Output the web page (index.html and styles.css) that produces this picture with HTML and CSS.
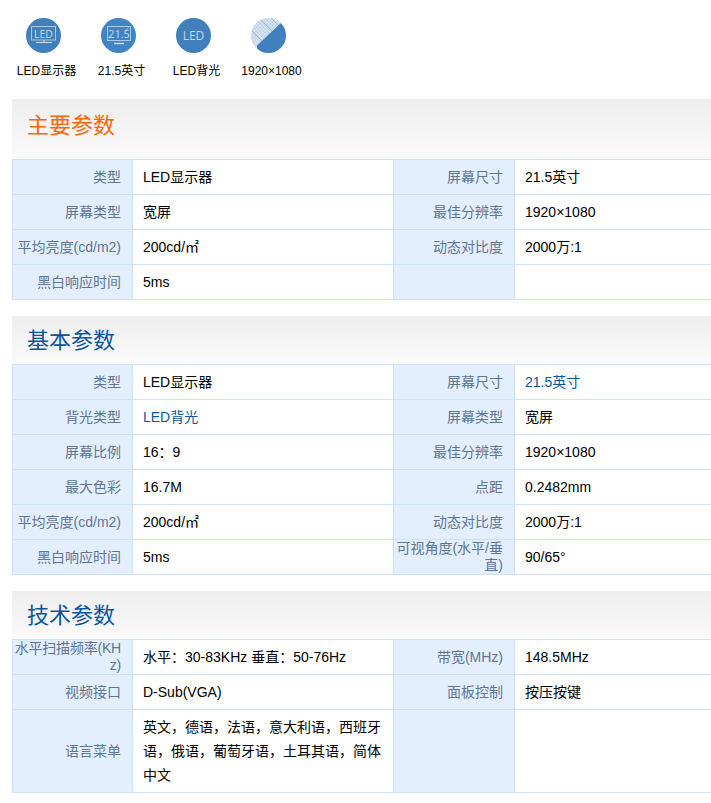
FILE: index.html
```html
<!DOCTYPE html>
<html lang="zh-CN">

<head>
  <meta charset="UTF-8">
  <meta name="viewport" content="width=device-width, initial-scale=1.0">
  <title>参数</title>
  <link rel="stylesheet" href="styles.css">
</head>

<body>
  <div class="page">
    <div class="icons">
      <div class="icons__item">
        <svg class="icons__pic" viewBox="0 0 35 35">
          <circle cx="17.5" cy="17.5" r="17.5" fill="#3f80bd" />
          <rect x="5.5" y="8.5" width="24" height="13.5" fill="none" stroke="#a9c8e4" />
          <path d="M10 24.5h16M18 22v2" fill="none" stroke="#cfe0f0" />
          <text x="17.5" y="19.5" class="icons__txt" font-size="10.5">LED</text>
        </svg>
        <div class="icons__label">LED显示器</div>
      </div>
      <div class="icons__item">
        <svg class="icons__pic" viewBox="0 0 35 35">
          <circle cx="17.5" cy="17.5" r="17.5" fill="#3f85c5" />
          <rect x="6.5" y="8.5" width="23" height="14" fill="none" stroke="#a9c8e4" />
          <path d="M8 21l3-3M25 12l3-3" fill="none" stroke="#a9c8e4" stroke-width=".7" />
          <path d="M13 25.5h10" fill="none" stroke="#cfe0f0" stroke-width="1.4" />
          <text x="18" y="20" class="icons__txt" font-size="11">21.5</text>
        </svg>
        <div class="icons__label">21.5英寸</div>
      </div>
      <div class="icons__item">
        <svg class="icons__pic" viewBox="0 0 35 35">
          <circle cx="17.5" cy="17.5" r="17.5" fill="#3f80bd" />
          <text x="17.5" y="21.5" class="icons__txt" font-size="12">LED</text>
        </svg>
        <div class="icons__label">LED背光</div>
      </div>
      <div class="icons__item">
        <svg class="icons__pic" viewBox="0 0 35 35">
          <defs>
            <pattern id="grid" width="2.5" height="2.5" patternUnits="userSpaceOnUse" patternTransform="rotate(45)">
              <rect width="2.5" height="2.5" fill="#dbe6f1" />
              <path d="M0 0h2.5M0 0v2.5" stroke="#a8c3de" stroke-width=".8" />
            </pattern>
            <clipPath id="round">
              <circle cx="17.5" cy="17.5" r="17.5" />
            </clipPath>
          </defs>
          <g clip-path="url(#round)">
            <rect width="35" height="35" fill="url(#grid)" />
            <path d="M8 0l20 20M0 12l14 14M20 0l10 10" stroke="#86aad0" stroke-width=".7" />
            <path d="M6 27.5L30 5l5 5v25H6z" fill="#3f80bd" />
          </g>
        </svg>
        <div class="icons__label">1920×1080</div>
      </div>
    </div>

    <div class="sec sec--main">
      <h2 class="sec__title">主要参数</h2>
      <table class="params">
        <colgroup>
          <col class="params__k">
          <col class="params__v">
          <col class="params__k2">
          <col class="params__v">
        </colgroup>
        <tr>
          <th>类型</th>
          <td>LED显示器</td>
          <th>屏幕尺寸</th>
          <td>21.5英寸</td>
        </tr>
        <tr>
          <th>屏幕类型</th>
          <td>宽屏</td>
          <th>最佳分辨率</th>
          <td>1920×1080</td>
        </tr>
        <tr>
          <th>平均亮度(cd/m2)</th>
          <td>200cd/㎡</td>
          <th>动态对比度</th>
          <td>2000万:1</td>
        </tr>
        <tr>
          <th>黑白响应时间</th>
          <td>5ms</td>
          <th></th>
          <td></td>
        </tr>
      </table>
    </div>

    <div class="sec">
      <h2 class="sec__title">基本参数</h2>
      <table class="params">
        <colgroup>
          <col class="params__k">
          <col class="params__v">
          <col class="params__k2">
          <col class="params__v">
        </colgroup>
        <tr>
          <th>类型</th>
          <td>LED显示器</td>
          <th>屏幕尺寸</th>
          <td><a href="#">21.5英寸</a></td>
        </tr>
        <tr>
          <th>背光类型</th>
          <td><a href="#">LED背光</a></td>
          <th>屏幕类型</th>
          <td>宽屏</td>
        </tr>
        <tr>
          <th>屏幕比例</th>
          <td>16：9</td>
          <th>最佳分辨率</th>
          <td>1920×1080</td>
        </tr>
        <tr>
          <th>最大色彩</th>
          <td>16.7M</td>
          <th>点距</th>
          <td>0.2482mm</td>
        </tr>
        <tr>
          <th>平均亮度(cd/m2)</th>
          <td>200cd/㎡</td>
          <th>动态对比度</th>
          <td>2000万:1</td>
        </tr>
        <tr>
          <th>黑白响应时间</th>
          <td>5ms</td>
          <th>可视角度(水平/垂直)</th>
          <td>90/65°</td>
        </tr>
      </table>
    </div>

    <div class="sec">
      <h2 class="sec__title">技术参数</h2>
      <table class="params">
        <colgroup>
          <col class="params__k">
          <col class="params__v">
          <col class="params__k2">
          <col class="params__v">
        </colgroup>
        <tr>
          <th class="params__tight">水平扫描频率(KHz)</th>
          <td>水平：30-83KHz 垂直：50-76Hz</td>
          <th>带宽(MHz)</th>
          <td>148.5MHz</td>
        </tr>
        <tr>
          <th>视频接口</th>
          <td>D-Sub(VGA)</td>
          <th>面板控制</th>
          <td>按压按键</td>
        </tr>
        <tr>
          <th>语言菜单</th>
          <td>英文，德语，法语，意大利语，西班牙语，俄语，葡萄牙语，土耳其语，简体中文</td>
          <th></th>
          <td></td>
        </tr>
      </table>
    </div>
  </div>
</body>

</html>
```

FILE: styles.css
```css
html,
body {
  margin: 0;
  padding: 0;
  background-color: #fff;
}

.page {
  width: 711px;
  overflow: hidden;
  font-family: "Liberation Sans", "Noto Sans CJK SC", sans-serif;
  font-size: 14px;
  color: #000;
}

.icons {
  display: flex;
  padding: 18px 0 0 9px;
  height: 99px;
  box-sizing: border-box;
}

.icons__item {
  display: flex;
  flex-direction: column;
  align-items: center;
  width: 75px;
}

.icons__pic {
  display: block;
  width: 35px;
  height: 35px;
  margin-right: 7px;
}

.icons__txt {
  fill: #c3d8ec;
  text-anchor: middle;
  font-family: "Open Sans", sans-serif;
}

.icons__label {
  margin-top: 10px;
  font-size: 12px;
  line-height: 16px;
  white-space: nowrap;
}

.sec {
  width: 765px;
  margin: 0 0 16px 12px;
}

.sec__title {
  margin: 0;
  height: 47px;
  padding: 1px 0 0 15px;
  font-size: 22px;
  font-weight: normal;
  line-height: 48px;
  color: #0b55a0;
  background: linear-gradient(#eeeeee, #fafafa);
}

.sec--main .sec__title {
  height: 60px;
  padding-top: 0;
  line-height: 54px;
  color: #ff6600;
}

.params {
  width: 763px;
  table-layout: fixed;
  border-collapse: collapse;
}

.params__k {
  width: 120px;
}

.params__k2 {
  width: 121px;
}

.params__v {
  width: 261px;
}

.params th,
.params td {
  height: 34px;
  padding: 0;
  border: 1px solid #cde1fa;
  font-weight: normal;
}

.params th {
  padding: 0 11px 0 0;
  text-align: right;
  line-height: 17px;
  word-break: break-all;
  color: #5f7595;
  background-color: #e3effe;
}

.params th.params__tight {
  letter-spacing: -0.2px;
}

.params td {
  padding: 5px 10px;
  line-height: 24px;
  box-sizing: border-box;
}

.params a {
  color: #0b55a0;
  text-decoration: none;
}
```
